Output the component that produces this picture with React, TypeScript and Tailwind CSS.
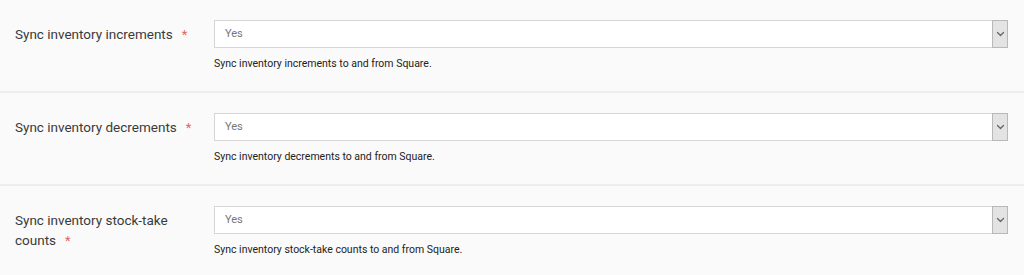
import React from "react";

interface SyncRow {
  label: string;
  help: string;
}

const rows: SyncRow[] = [
  {
    label: "Sync inventory increments",
    help: "Sync inventory increments to and from Square.",
  },
  {
    label: "Sync inventory decrements",
    help: "Sync inventory decrements to and from Square.",
  },
  {
    label: "Sync inventory stock-take counts",
    help: "Sync inventory stock-take counts to and from Square.",
  },
];

const SelectField: React.FC = () => (
  <div className="flex h-[28px] bg-white border border-[#d6d6d6]">
    <div className="flex-1 flex items-center pl-[10px] text-[11px] text-[#777]">
      Yes
    </div>
    <div className="w-[16px] -my-px -mr-px flex items-center justify-center bg-[#e3e3e3] border border-[#b8b8b8]">
      <svg className="w-[9px] h-[6px]" viewBox="0 0 9 6" fill="none"
        stroke="#666" strokeWidth="1.3" strokeLinecap="round" strokeLinejoin="round">
        <polyline points="1.5 1.5 4.5 4.5 7.5 1.5" />
      </svg>
    </div>
  </div>
);

export default function App() {
  return (
    <div className="w-[1024px] h-[275px] bg-[#fafafa] overflow-hidden"
      style={{ fontFamily: "Roboto, 'Liberation Sans', sans-serif" }}>
      {rows.map((row, i) => (
        <div
          key={row.label}
          className={`flex pl-[15px] pr-[16px] pt-[20px] h-[93px] ${i < rows.length - 1 ? "border-b-2 border-[#ededed]" : ""}`}
        >
          <div className="w-[199px] pr-[16px] pt-[4px] text-[13.5px] leading-[20px] text-[#3a3a3a]">
            {row.label}
            <span className="text-[#e06666] text-[13px] ml-[9px]">*</span>
          </div>
          <div className="flex-1">
            <SelectField />
            <p className="mt-[9px] text-[10.5px] leading-[14px] text-[#222]">
              {row.help}
            </p>
          </div>
        </div>
      ))}
    </div>
  );
}
